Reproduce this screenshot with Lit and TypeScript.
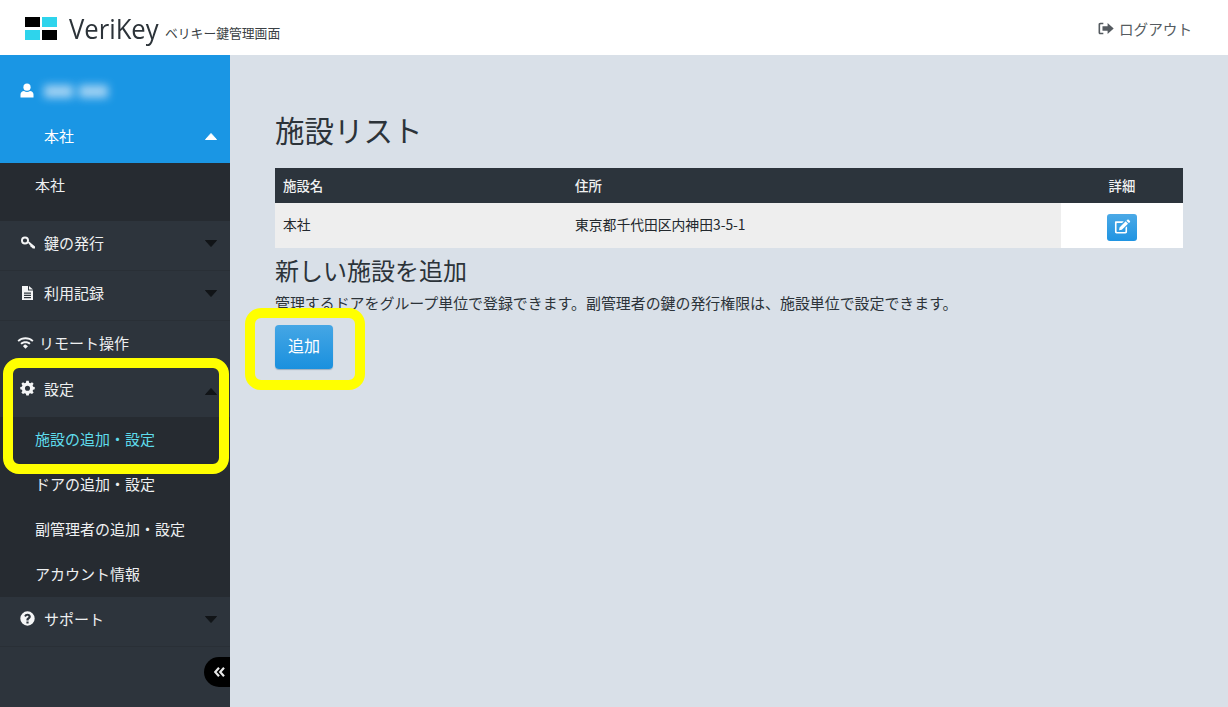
import { LitElement, html, css, svg } from "lit";
import { customElement } from "lit/decorators.js";

const caret = (up: boolean, color: string) => html`<svg class="caret" width="12" height="7" viewBox="0 0 12 7"><path d="${up ? "M6 .5 L11.5 6.5 H.5 Z" : "M.5 .5 H11.5 L6 6.5 Z"}" fill="${color}" stroke="${color}" stroke-linejoin="round"/></svg>`;

const icons = {
  user: svg`<circle cx="7" cy="4.2" r="3.6"/><path d="M.5 14.5 V11.5 C.5 9.2 2.2 8 4 8 C5.8 9.4 8.2 9.4 10 8 C11.8 8 13.5 9.2 13.5 11.5 V14.5 Z"/>`,
  key: svg`<path fill-rule="evenodd" d="M5 1.5 A4 4 0 1 1 5 9.5 A4 4 0 0 1 5 1.5 Z M5 3.4 A2.1 2.1 0 1 0 5 7.6 A2.1 2.1 0 0 0 5 3.4 Z"/><path d="M7.8 7.6 L9 6.5 L15 11.4 L15 13.4 L12.8 13.4 L11.6 12.2 L10.6 12 L10.4 10.8 Z"/>`,
  file: svg`<path fill-rule="evenodd" d="M2 1 H8 V5.5 H13 V15 H2 Z M4 7.5 V8.7 H11 V7.5 Z M4 9.8 V11 H11 V9.8 Z M4 12.1 V13.3 H11 V12.1 Z"/><path d="M9 1 L13 4.6 H9 Z"/>`,
  cog: svg`<path fill-rule="evenodd" d="M6.2 .8 H8.8 L9.2 2.8 L10.6 3.4 L12.3 2.3 L14 4 L12.9 5.7 L13.5 7.1 L15.2 7.5 V9.9 L13.5 10.3 L12.9 11.7 L14 13.4 L12.3 15 L10.6 14 L9.2 14.5 L8.8 16.4 H6.2 L5.8 14.5 L4.4 14 L2.7 15 L1 13.4 L2.1 11.7 L1.5 10.3 L-.2 9.9 V7.5 L1.5 7.1 L2.1 5.7 L1 4 L2.7 2.3 L4.4 3.4 L5.8 2.8 Z M7.5 6 A2.7 2.7 0 1 0 7.5 11.4 A2.7 2.7 0 0 0 7.5 6 Z"/>`,
};

@customElement("app-root")
export class AppRoot extends LitElement {
  static styles = css`
    :host { display: block; position: relative; width: 1228px; height: 707px; overflow: hidden; background: #d9e0e8;
      font-family: "Noto Sans CJK JP", "Noto Sans", sans-serif; color: #2c3339; }
    * { box-sizing: border-box; }
    header { height: 55px; background: #fff; display: flex; align-items: center; padding: 0 36px 0 25px; }
    .logo { display: grid; grid-template-columns: 17px 15px; grid-template-rows: 10px 10px; row-gap: 3px; width: 33px; margin-top: 1px; }
    .logo i { display: block; width: 15px; height: 10px; }
    .logo .k { background: #000; }
    .logo .c { background: #2ed4ec; }
    .brand { font-family: "Open Sans", sans-serif; font-size: 27px; margin-left: 11px; margin-top: 2px; color: #2c3339; line-height: 1; transform: scaleX(.95); transform-origin: left; width: 90px; }
    .tag { font-size: 12.8px; margin-left: 6px; margin-top: 10px; color: #3a3f44; }
    .logout { margin-left: auto; margin-top: 2px; display: flex; align-items: center; gap: 5px; font-size: 14.6px; color: #555b60; }
    .body { display: flex; height: 652px; }
    aside { width: 230px; background: #2d343c; flex: none; position: relative; color: #eef0f1; font-size: 15px; }
    .user { background: #1a96e4; height: 108px; color: #fff; }
    .uname { height: 72px; padding: 28px 0 0 20px; display: flex; align-items: flex-start; gap: 10px; }
    .blur { width: 64px; height: 13px; margin-top: 2px; filter: blur(4px); background: linear-gradient(90deg, #b7dcf6 0 45%, transparent 45% 55%, #b7dcf6 55%); opacity: .85; }
    .office { display: flex; align-items: center; justify-content: space-between; padding: 0 13px 0 44px; height: 18px; margin-top: -1px; }
    .office .caret { margin-top: 2px; }
    .sub { background: #262b31; }
    .sub a { display: flex; align-items: center; height: 45px; padding: 0 0 2px 35px; color: #eef0f1; }
    .sub.top { height: 58px; }
    .sub a.on { color: #5fdcec; }
    .item { display: flex; align-items: center; height: 50px; padding: 0 13px 6px 20px; border-bottom: 1px solid #292f36; }
    .item svg.ic { flex: none; fill: #f4f5f6; }
    .item .caret { margin-top: 2px; }
    .item .label { margin-left: 9px; flex: 1; }
    .item.remote { height: 46px; padding: 0 13px 4px 17px; border-bottom: 0; }
    .item.remote .label { margin-left: 5px; }
    .item.cfg { height: 50px; padding-bottom: 8px; border-bottom: 0; }
    .item.cfg .caret { margin-top: 6px; }
    .collapse { position: absolute; right: 0; top: 602px; width: 26px; height: 30px; background: #000; border-radius: 15px 0 0 15px; display: flex; align-items: center; justify-content: flex-end; padding-right: 5px; }
    main { flex: 1; padding: 54px 45px 0; }
    h1 { font-weight: 400; font-size: 29.5px; line-height: 40px; margin: 0 0 19px; color: #2c3339; }
    table { width: 908px; border-collapse: collapse; table-layout: fixed; font-size: 13.8px; }
    th { background: #2c343c; color: #f0f1f2; height: 35px; font-size: 13.4px; font-weight: 500; text-align: left; padding: 0 8px 2px; }
    th.ctr { text-align: center; }
    td { height: 45px; padding: 0 8px 4px; background: #eeeeee; font-weight: 400; color: #23282d; }
    td.ctr { background: #fff; padding: 0; text-align: center; }
    .edit { display: inline-flex; align-items: center; justify-content: center; width: 30px; height: 27px; margin-top: 3px; border-radius: 3px; background: linear-gradient(#4ba9e6, #1f94e2); vertical-align: middle; }
    h2 { font-weight: 400; font-size: 24px; line-height: 30px; margin: 7px 0 7px; color: #2c3339; }
    p { margin: 0 0 11px; font-size: 14.93px; line-height: 22px; color: #2c3339; white-space: nowrap; }
    .btn { display: flex; align-items: center; justify-content: center; width: 58px; height: 44px; padding-bottom: 5px; border-radius: 4px; background: linear-gradient(#45a6e5, #1a90de); color: #fff; font-size: 16px; box-shadow: 0 1px 1px rgba(40,80,120,.35); }
    .mark { position: absolute; border: 10px solid #ffff00; border-radius: 16px; pointer-events: none; }
    .m1 { left: 3px; top: 358px; width: 226px; height: 116px; }
    .m2 { left: 245px; top: 308px; width: 120px; height: 82px; }
  `;

  render() {
    return html`
      <header>
        <div class="logo">
          <i class="k"></i><i class="c"></i><i class="c"></i><i class="k"></i>
        </div>
        <div class="brand">VeriKey</div>
        <div class="tag">ベリキー鍵管理画面</div>
        <div class="logout">
          <svg width="16" height="13" viewBox="0 0 15 12" fill="#555b60">
            <path d="M5 .5 H2.2 C1 .5 .5 1.2 .5 2.2 V9.8 C.5 10.8 1 11.5 2.2 11.5 H5 V10 H2.6 C2.2 10 2 9.8 2 9.4 V2.6 C2 2.2 2.2 2 2.6 2 H5 Z"/>
            <path d="M9 .8 L14.7 6 L9 11.2 V8.2 H4.2 V3.8 H9 Z"/>
          </svg>
          ログアウト
        </div>
      </header>
      <div class="body">
        <aside>
          <div class="user">
            <div class="uname">
              <svg width="14" height="15" viewBox="0 0 14 15" fill="#fff">${icons.user}</svg>
              <div class="blur"></div>
            </div>
            <div class="office"><span>本社</span>${caret(true, "#fff")}</div>
          </div>
          <div class="sub top"><a>本社</a></div>
          <div class="item"><svg class="ic" width="15" height="15" viewBox="0 0 15 15">${icons.key}</svg><span class="label">鍵の発行</span>${caret(false, "#111417")}</div>
          <div class="item"><svg class="ic" width="15" height="16" viewBox="0 0 15 16">${icons.file}</svg><span class="label">利用記録</span>${caret(false, "#111417")}</div>
          <div class="item remote">
            <svg class="ic" width="17" height="13" viewBox="0 0 17 13">
              <path d="M.5 4.4 C4.8 .2 12.2 .2 16.5 4.4 L15.2 5.7 C11.6 2.4 5.4 2.4 1.8 5.7 Z"/>
              <path d="M3.4 7.2 C6.2 4.6 10.8 4.6 13.6 7.2 L12.3 8.5 C10.2 6.7 6.8 6.7 4.7 8.5 Z"/>
              <path d="M8.5 8.6 L11 10.2 L8.5 12.8 L6 10.2 C6.7 9.2 7.6 8.6 8.5 8.6 Z"/>
            </svg>
            <span class="label">リモート操作</span>
          </div>
          <div class="item cfg"><svg class="ic" width="15" height="16" viewBox="0 0 15 17">${icons.cog}</svg><span class="label">設定</span>${caret(true, "#111417")}</div>
          <div class="sub">
            <a class="on">施設の追加・設定</a>
            <a>ドアの追加・設定</a>
            <a>副管理者の追加・設定</a>
            <a>アカウント情報</a>
          </div>
          <div class="item">
            <svg class="ic" width="15" height="15" viewBox="0 0 15 15">
              <path fill-rule="evenodd" d="M7.5 .3 A7.2 7.2 0 1 1 7.5 14.7 A7.2 7.2 0 0 1 7.5 .3 Z M6.4 10.4 V12.4 H8.6 V10.4 Z M7.6 2.8 C5.8 2.8 4.8 3.7 4.3 4.9 L5.9 6 C6.3 5.2 6.7 4.8 7.4 4.8 C8 4.8 8.5 5.1 8.5 5.6 C8.5 6.1 8.1 6.4 7.5 6.8 C6.8 7.2 6.4 7.8 6.4 8.6 V9.4 H8.6 V8.9 C8.6 8.5 8.9 8.3 9.4 8 C10.2 7.5 10.8 6.8 10.8 5.6 C10.8 3.9 9.3 2.8 7.6 2.8 Z"/>
            </svg>
            <span class="label">サポート</span>${caret(false, "#111417")}
          </div>
          <div class="collapse">
            <svg width="11" height="10" viewBox="0 0 11 10" fill="none" stroke="#e8e8e8" stroke-width="2.2">
              <path d="M5 .8 L1.2 5 L5 9.2 M10 .8 L6.2 5 L10 9.2"/>
            </svg>
          </div>
        </aside>
        <main>
          <h1>施設リスト</h1>
          <table>
            <colgroup><col style="width:292px"/><col style="width:494px"/><col style="width:122px"/></colgroup>
            <tr><th>施設名</th><th>住所</th><th class="ctr">詳細</th></tr>
            <tr><td>本社</td><td>東京都千代田区内神田3-5-1</td>
              <td class="ctr"><span class="edit">
                <svg width="17" height="16" viewBox="0 0 16 15">
                  <path fill="#fff" d="M1.8 2.2 H9.2 L7.7 3.7 H2.9 C2.6 3.7 2.4 3.9 2.4 4.2 V11.6 C2.4 11.9 2.6 12.1 2.9 12.1 H10.3 C10.6 12.1 10.8 11.9 10.8 11.6 V8.2 L12.3 6.7 V12 C12.3 13 11.7 13.6 10.7 13.6 H2.5 C1.5 13.6 .9 13 .9 12 V3.1 C.9 2.6 1.3 2.2 1.8 2.2 Z"/>
                  <path fill="#fff" d="M5.2 8 L11 2.2 L13.2 4.4 L7.4 10.2 L4.8 10.6 Z M11.7 1.5 L12.6 .6 C13 .3 13.4 .3 13.8 .6 L15 1.8 C15.3 2.2 15.3 2.6 15 3 L14 3.7 Z"/>
                </svg>
              </span></td></tr>
          </table>
          <h2>新しい施設を追加</h2>
          <p>管理するドアをグループ単位で登録できます。副管理者の鍵の発行権限は、施設単位で設定できます。</p>
          <div class="btn">追加</div>
        </main>
      </div>
      <div class="mark m1"></div>
      <div class="mark m2"></div>
    `;
  }
}
